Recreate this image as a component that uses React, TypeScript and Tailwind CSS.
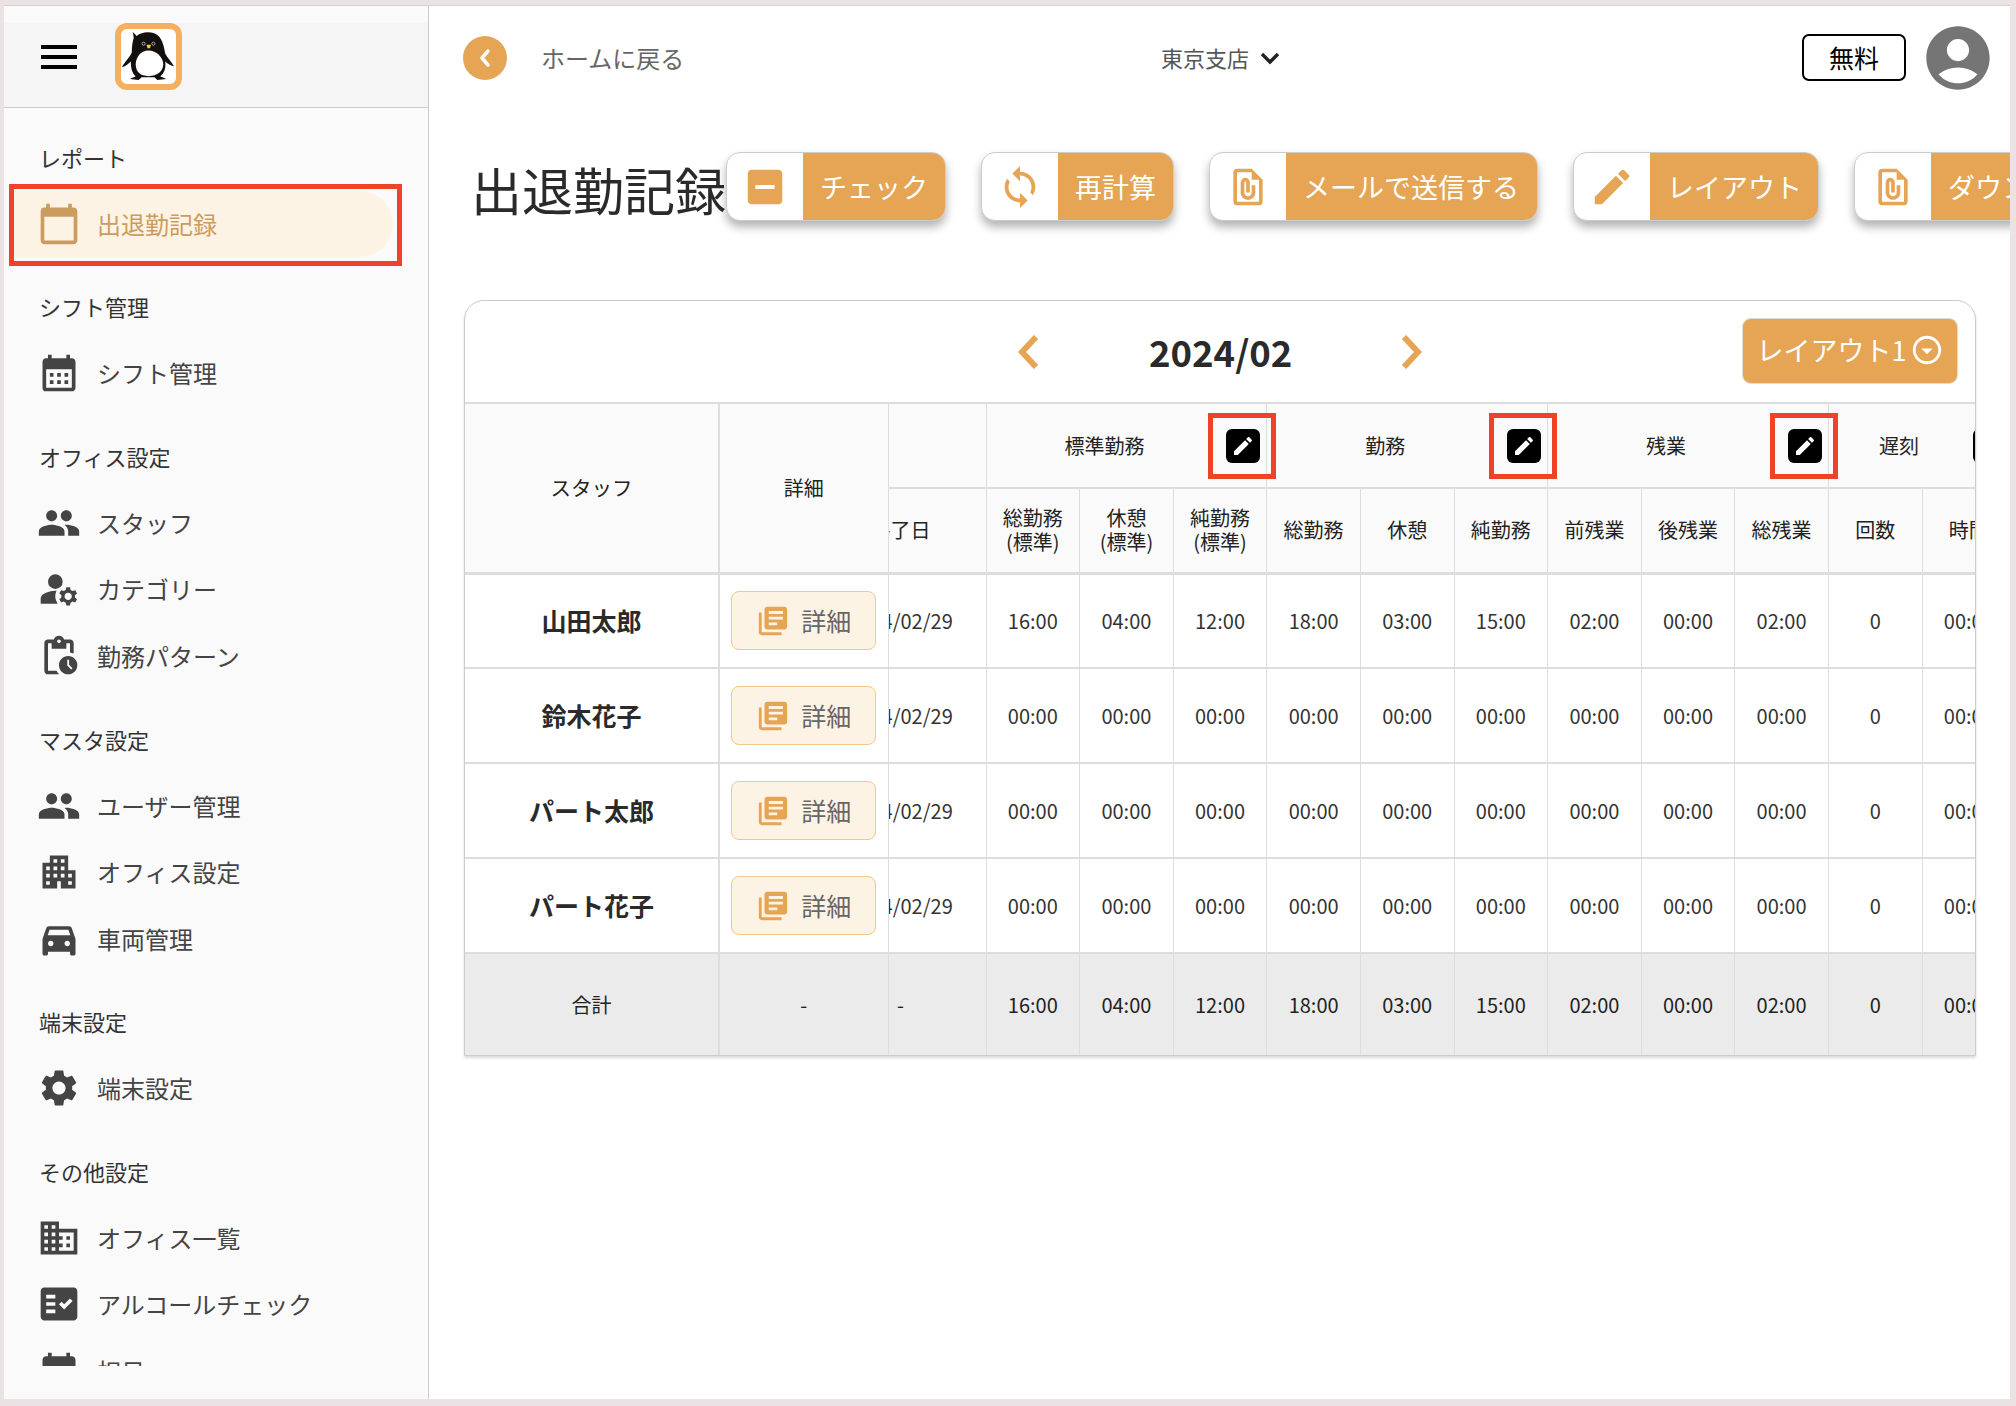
import type { ReactNode } from 'react';
import {
  MdMenu, MdCalendarToday, MdCalendarMonth, MdPeople, MdManageAccounts, MdPendingActions, MdApartment,
  MdDirectionsCarFilled, MdSettings, MdBusiness, MdFactCheck, MdIndeterminateCheckBox, MdSync,
  MdOutlineFilePresent, MdEdit, MdLibraryBooks, MdOutlineArrowDropDownCircle, MdAccountCircle,
} from 'react-icons/md';

const font = '[font-family:"Noto_Sans_CJK_JP","Noto_Sans",sans-serif]';

const navGroups = [
  { label: 'シフト管理', items: [{ icon: MdCalendarMonth, text: 'シフト管理' }] },
  {
    label: 'オフィス設定',
    items: [
      { icon: MdPeople, text: 'スタッフ' },
      { icon: MdManageAccounts, text: 'カテゴリー' },
      { icon: MdPendingActions, text: '勤務パターン' },
    ],
  },
  {
    label: 'マスタ設定',
    items: [
      { icon: MdPeople, text: 'ユーザー管理' },
      { icon: MdApartment, text: 'オフィス設定' },
      { icon: MdDirectionsCarFilled, text: '車両管理' },
    ],
  },
  { label: '端末設定', items: [{ icon: MdSettings, text: '端末設定' }] },
  {
    label: 'その他設定',
    items: [
      { icon: MdBusiness, text: 'オフィス一覧' },
      { icon: MdFactCheck, text: 'アルコールチェック' },
      { icon: MdCalendarMonth, text: '祝日' },
    ],
  },
];

const subHeads = ['総勤務', '休憩', '純勤務', '前残業', '後残業', '総残業', '回数', '時間'];
const zero = ['00:00', '00:00', '00:00', '00:00', '00:00', '00:00', '00:00', '00:00', '00:00', '0', '00:00'];

const rows = [
  { name: '山田太郎', vals: ['16:00', '04:00', '12:00', '18:00', '03:00', '15:00', '02:00', '00:00', '02:00', '0', '00:00'] },
  { name: '鈴木花子', vals: zero },
  { name: 'パート太郎', vals: zero },
  { name: 'パート花子', vals: zero },
];
const totals = ['16:00', '04:00', '12:00', '18:00', '03:00', '15:00', '02:00', '00:00', '02:00', '0', '00:00'];

function Penguin() {
  return (
    <svg viewBox="0 0 56 56" className="w-full h-full">
      <path d="M12 3 L16 7 C22 2 34 2 39 8 C43 13 44 20 45 25 C47 29 51 33 54 38 C50 37 47 35 45 33 C46 40 44 45 40 48 L46 51 L37 52 L34 49 L21 49 L18 52 L9 51 L15 48 C11 45 10 39 10 33 C8 35 5 38 1 39 C4 33 9 29 11 24 C11 17 12 12 13 9 Z" fill="#130f0e" />
      <path d="M28 22 C20 22 15 29 15 36 C15 44 20 48 28 48 C37 48 43 43 43 36 C43 29 36 22 28 22 Z" fill="#fff" />
      <circle cx="23" cy="15" r="1.6" fill="#130f0e" stroke="#ddd" strokeWidth="0.7" />
      <circle cx="33" cy="15" r="1.6" fill="#130f0e" stroke="#ddd" strokeWidth="0.7" />
      <path d="M26 16 H30.5 L29.5 19.5 H27 Z" fill="#f4d21f" />
    </svg>
  );
}

function NavLabel({ children }: { children: ReactNode }) {
  return <div className="h-[66.5px] flex items-center pl-[35px] text-[22px] text-[#333]">{children}</div>;
}

function NavItem({ icon: Icon, text }: { icon: typeof MdPeople; text: string }) {
  return (
    <div className="h-[66.5px] flex items-center pl-[33px] text-[24px] text-[#444] shrink-0">
      <Icon className="w-[44px] h-[44px] shrink-0 mr-[16px] text-[#444]" />
      {text}
    </div>
  );
}

function ActionButton({ icon, label, width }: { icon: ReactNode; label: string; width: string }) {
  return (
    <div className={`${width} h-[69px] shrink-0 flex rounded-[14px] border border-[#ccc] bg-white overflow-hidden shadow-[0_6px_10px_rgba(0,0,0,0.3)]`}>
      <div className="flex items-center justify-center w-[76px] shrink-0 text-[#e5a555]">{icon}</div>
      <div className="flex-1 bg-[#e5a555] text-white text-[27px] flex items-center pl-[17px] pt-[2px] whitespace-nowrap overflow-hidden">
        {label}
      </div>
    </div>
  );
}

function GroupHead({ label, colSpan = 3, clipped = false }: { label: string; colSpan?: number; clipped?: boolean }) {
  return (
    <th colSpan={colSpan} className="border-r border-[#ddd] font-normal p-0 bg-[#fafafa] text-[20px] text-[#222]">
      <div className={`flex items-center ${clipped ? 'pr-[8px]' : 'pr-[6px]'}`}>
        <span className="flex-1 text-center pr-[4px]">{label}</span>
        <div className="relative w-[34px] h-[34px] bg-black rounded-[6px] flex items-center justify-center shrink-0">
          <MdEdit className="w-[24px] h-[24px] text-white" />
          {!clipped && <div className="absolute -left-[18px] -right-[16px] -top-[16px] -bottom-[16px] border-[5px] border-[#ee4326]" />}
        </div>
      </div>
    </th>
  );
}

export default function App() {
  return (
    <div className={`${font} w-[2016px] h-[1406px] overflow-hidden bg-[#ebe3e3] pt-[5px] pl-[4px] pr-[6px] pb-[7px]`}>
      <div className="flex h-full border-t border-[#d6d0d0]">
        {/* sidebar */}
        <aside className="w-[425px] shrink-0 h-full bg-[#fafafa] border-r border-[#ccc] flex flex-col">
          <div className="pt-[17px] shrink-0">
            <div className="h-[85px] bg-[#f5f5f5] border-b border-[#ccc] flex items-center pl-[31px]">
              <MdMenu className="w-[48px] h-[48px] text-black -mt-[16px]" />
              <div className="ml-[32px] -mt-[18px] w-[67px] h-[67px] border-[6px] border-[#f4b05f] rounded-[12px] bg-white overflow-hidden">
                <Penguin />
              </div>
            </div>
          </div>
          <nav className="h-[1258px] overflow-hidden pt-[16px] shrink-0">
            <div className="pb-[16.6px]">
              <NavLabel>レポート</NavLabel>
              <div className="relative h-[66.5px] flex items-center">
                <div className="ml-[10px] w-[379px] h-[66.5px] bg-[#fdf3e4] rounded-r-full flex items-center pl-[23px] text-[24px] text-[#cb9c60]">
                  <MdCalendarToday className="w-[44px] h-[44px] shrink-0 mr-[16px]" />
                  出退勤記録
                </div>
                <div className="absolute left-[5px] top-[-7px] w-[393px] h-[82px] border-[5px] border-[#ee4326]" />
              </div>
            </div>
            {navGroups.map(g => (
              <div key={g.label} className="pb-[16.6px]">
                <NavLabel>{g.label}</NavLabel>
                {g.items.map(it => <NavItem key={it.text} icon={it.icon} text={it.text} />)}
              </div>
            ))}
          </nav>
        </aside>

        {/* main */}
        <main className="flex-1 min-w-0 bg-white overflow-hidden">
          <div className="h-[103px] flex items-center pl-[34px] pr-[20px]">
            <div className="w-[44px] h-[44px] rounded-full bg-[#e5a555] flex items-center justify-center shrink-0">
              <svg viewBox="0 0 14 20" className="w-[14px] h-[20px]" fill="none" stroke="#fff" strokeWidth="3.5" strokeLinecap="round" strokeLinejoin="round"><path d="M10 3 L4 10 L10 17" /></svg>
            </div>
            <span className="ml-[34px] text-[24px] text-[#666] w-[620px]">ホームに戻る</span>
            <span className="text-[22px] text-[#555]">東京支店</span>
            <svg viewBox="0 0 20 14" className="w-[20px] h-[14px] ml-[11px]" fill="none" stroke="#222" strokeWidth="3.4"><path d="M2 3 L10 11 L18 3" /></svg>
            <div className="ml-auto w-[104px] h-[47px] border-2 border-black rounded-[7px] flex items-center justify-center text-[25px] text-black">無料</div>
            <MdAccountCircle className="w-[76px] h-[76px] text-[#757575] ml-[14px] -mr-[6px]" />
          </div>

          <div className="flex items-center h-[155px] pl-[42px] gap-[35px] overflow-hidden">
            <div className="flex items-center shrink-0">
              <h1 className="w-[255px] mt-[6px] text-[51px] font-normal leading-none text-[#2a2a2a] whitespace-nowrap">出退勤記録</h1>
              <ActionButton label="チェック" width="w-[220px]" icon={<MdIndeterminateCheckBox className="w-[46px] h-[46px]" />} />
            </div>
            <ActionButton label="再計算" width="w-[193px]" icon={<MdSync className="w-[46px] h-[46px]" />} />
            <ActionButton label="メールで送信する" width="w-[329px]" icon={<MdOutlineFilePresent className="w-[44px] h-[44px]" />} />
            <ActionButton label="レイアウト" width="w-[246px]" icon={<MdEdit className="w-[46px] h-[46px]" />} />
            <ActionButton label="ダウンロード" width="w-[300px]" icon={<MdOutlineFilePresent className="w-[44px] h-[44px]" />} />
          </div>

          {/* card */}
          <div className="ml-[35px] mt-[36px] w-[1512px] border border-[#ccc] rounded-t-[20px] overflow-hidden bg-white shadow-[0_2px_3px_rgba(0,0,0,0.15)]">
            <div className="relative h-[101px] flex items-center justify-center">
              <div className="flex items-center gap-[110px]">
                <svg viewBox="0 0 21 34" className="w-[21px] h-[34px]" fill="none" stroke="#e5a555" strokeWidth="6"><path d="M18 2 L4 17 L18 32" /></svg>
                <span className="text-[36.5px] font-bold text-[#2a2a2a] leading-none w-[142px] text-center pr-[4px] mt-[2px]">2024/02</span>
                <svg viewBox="0 0 21 34" className="w-[21px] h-[34px]" fill="none" stroke="#e5a555" strokeWidth="6"><path d="M3 2 L17 17 L3 32" /></svg>
              </div>
              <div className="absolute right-[17px] top-[17px] w-[216px] h-[66px] rounded-[9px] bg-[#e5a555] border border-[#ddd] flex items-center justify-center text-white text-[27px]">
                <span className="-mt-[2px]">レイアウト1</span>
                <MdOutlineArrowDropDownCircle className="w-[34px] h-[34px] ml-[3px] -mt-[2px]" />
              </div>
            </div>

            <table className="table-fixed border-collapse w-[1551px] text-[20px] text-[#333]">
              <colgroup>
                <col className="w-[254px]" />
                <col className="w-[169px]" />
                <col className="w-[98px]" />
                {Array.from({ length: 11 }).map((_, i) => <col key={i} className="w-[93.6px]" />)}
              </colgroup>
              <thead>
                <tr className="h-[85px] border-t-2 border-[#ddd]">
                  <th rowSpan={2} className="border-r-2 border-b-[3px] border-[#ddd] bg-[#fafafa] font-normal text-[20.5px] text-[#222]">スタッフ</th>
                  <th rowSpan={2} className="border-r border-b-[3px] border-[#ddd] bg-[#fafafa] font-normal text-[20px] text-[#222]">詳細</th>
                  <th className="border-r border-[#ddd] bg-[#fafafa]" />
                  <GroupHead label="標準勤務" />
                  <GroupHead label="勤務" />
                  <GroupHead label="残業" />
                  <GroupHead label="遅刻" colSpan={2} clipped />
                </tr>
                <tr className="h-[85px] border-t-2 border-b-[3px] border-[#ddd] bg-[#fafafa] text-[#222] leading-[24px]">
                  <th className="border-r border-[#ddd] font-normal overflow-hidden">
                    <div className="w-[170px] -ml-[73px] text-center">終了日</div>
                  </th>
                  {['総勤務', '休憩', '純勤務'].map(h => (
                    <th key={h} className="border-r border-[#ddd] font-normal">{h}<br />(標準)</th>
                  ))}
                  {subHeads.map(h => (
                    <th key={h} className="border-r border-[#ddd] font-normal">{h}</th>
                  ))}
                </tr>
              </thead>
              <tbody>
                {rows.map(r => (
                  <tr key={r.name} className="h-[95px] border-b-2 border-[#ddd]">
                    <td className="border-r-2 border-[#ddd] text-center text-[25px] font-bold text-[#2a2a2a]">{r.name}</td>
                    <td className="border-r border-[#ddd] p-0">
                      <div className="mx-auto w-[145px] h-[59px] rounded-[8px] bg-[#fdf3e4] border border-[#f0c88c] flex items-center justify-center text-[25px] text-[#666]">
                        <MdLibraryBooks className="w-[34px] h-[34px] text-[#e5a555] mr-[11px]" />
                        詳細
                      </div>
                    </td>
                    <td className="border-r border-[#ddd] overflow-hidden">
                      <div className="w-[170px] -ml-[73px] text-center">2024/02/29</div>
                    </td>
                    {r.vals.map((v, i) => <td key={i} className="border-r border-[#ddd] text-center">{v}</td>)}
                  </tr>
                ))}
                <tr className="h-[102px] bg-[#ebebeb] text-[#222]">
                  <td className="border-r-2 border-[#ddd] text-center">合計</td>
                  <td className="border-r border-[#ddd] text-center">-</td>
                  <td className="border-r border-[#ddd] overflow-hidden">
                    <div className="w-[170px] -ml-[73px] text-center">-</div>
                  </td>
                  {totals.map((v, i) => <td key={i} className="border-r border-[#ddd] text-center">{v}</td>)}
                </tr>
              </tbody>
            </table>
          </div>
        </main>
      </div>
    </div>
  );
}
